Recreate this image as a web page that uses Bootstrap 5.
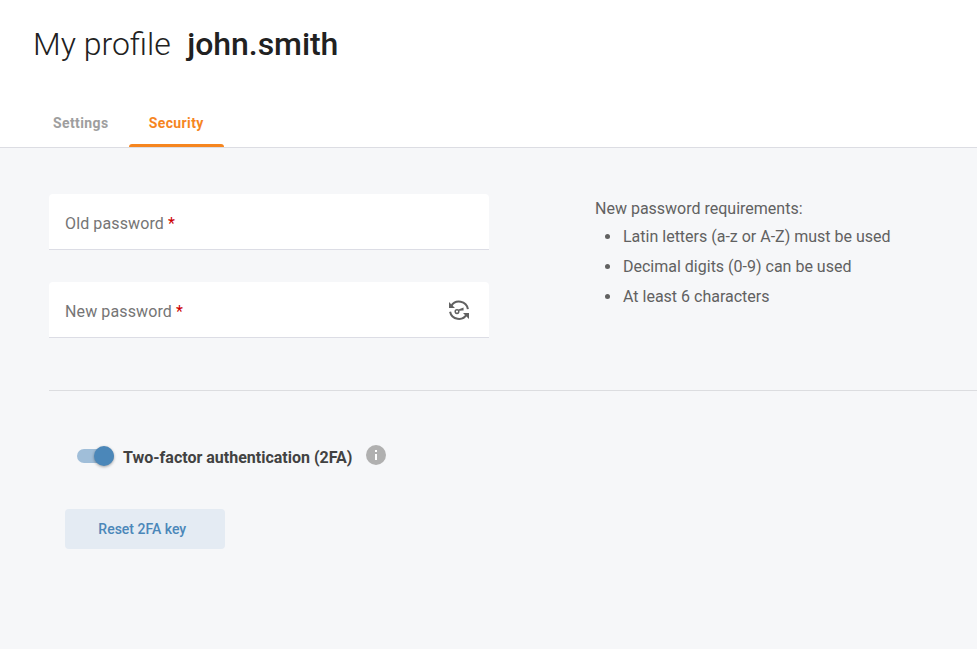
<!DOCTYPE html>
<html lang="en">
<head>
<meta charset="utf-8">
<meta name="viewport" content="width=device-width, initial-scale=1">
<title>My profile</title>
<link href="https://cdn.jsdelivr.net/npm/bootstrap@5.3.0/dist/css/bootstrap.min.css" rel="stylesheet">
<style>
body{font-family:Roboto,sans-serif;background:#f6f7f9;color:#212121;min-height:100vh;overflow:hidden}
.page-head{height:148px;border-bottom:1px solid #dcdde3}
.page-title{font-size:32px;line-height:40px;font-weight:300;padding:24px 0 0 33px;height:99px;white-space:pre}
.page-title strong{font-weight:500;margin-left:16.5px;letter-spacing:-.06px}
.profile-tabs{padding-left:33px;height:48px}
.profile-tabs .nav-link{width:95px;height:48px;padding:0 .5px 0 0;line-height:48px;font-size:14px;font-weight:700;letter-spacing:.4px;color:#9e9e9e;text-align:center;border-radius:0;position:relative}
.profile-tabs .nav-link:first-child{width:96px}
.profile-tabs .nav-link.active{color:#f6861f}
.profile-tabs .nav-link.active::after{content:"";position:absolute;left:0;right:0;bottom:0;height:3px;background:#f6861f;border-radius:3px 3px 0 0}
.page-body{padding:46px 0 0 49px}
.fields{width:440px;gap:32px}
.pw-field{height:56px;padding:4px 16px 0;background:#fff;border-bottom:1px solid #dcdde5;border-radius:4px 4px 0 0;color:#757575;letter-spacing:.12px}
.pw-field svg{margin-top:-2px}
.req-mark{color:#cc0000}
.rules{margin-left:106px;padding-top:3px;color:#616161;line-height:24px}
.rules ul{padding-left:9px;padding-top:1px}
.rules li{line-height:30px}
.rules li::before{content:"";width:5px;height:5px;border-radius:50%;background:#616161;margin:0 13.5px 2px .5px}
.divider{margin-top:52px;height:1px;background:#dcdde0}
.twofa{padding:54px 0 0 28px;height:76px}
.toggle{width:37px;height:14px;border-radius:7px;background:#a0bed9;margin-top:4px;position:relative}
.toggle span{position:absolute;right:0;top:-3px;width:20px;height:20px;border-radius:50%;background:#4b87b9;box-shadow:0 1px 3px rgba(0,0,0,.35)}
.twofa-label{margin:1px 14px 0 9px;font-weight:700;color:#424242;line-height:24px}
.btn-reset{margin:42px 0 0 16px;width:160px;height:40px;padding:0 5.5px 0 0;background:#e4ebf3;color:#4b87b9;font-size:14px;font-weight:500;border:0;border-radius:4px}
</style>
</head>
<body>
<header class="page-head bg-white">
<h1 class="page-title m-0">My profile<strong>john.smith</strong></h1>
<nav class="nav profile-tabs">
<a class="nav-link" href="#">Settings</a>
<a class="nav-link active" href="#">Security</a>
</nav>
</header>
<main class="page-body">
<section class="d-flex align-items-start">
<div class="fields d-flex flex-column">
<div class="pw-field d-flex align-items-center"><span>Old password <span class="req-mark">*</span></span></div>
<div class="pw-field d-flex align-items-center justify-content-between"><span>New password <span class="req-mark">*</span></span>
<svg width="28" height="28" viewBox="0 0 28 28" fill="none" stroke="#616161" stroke-width="2">
<path d="M6.2 9.2A9 9 0 0 1 22.9 12.2M21.8 17.3A9 9 0 0 1 5.1 14.7"/>
<path d="M4 5v6h6zM24 22v-6h-6z" fill="#616161" stroke="none"/>
<circle cx="12" cy="14.6" r="1.8" stroke-width="1.5"/><path d="M13.7 13.3l4.1-1.7v2M16 12.3v1.5" stroke-width="1.5"/>
</svg></div>
</div>
<div class="rules"><div>New password requirements:</div>
<ul class="m-0 list-unstyled"><li class="d-flex align-items-center">Latin letters (a-z or A-Z) must be used</li><li class="d-flex align-items-center">Decimal digits (0-9) can be used</li><li class="d-flex align-items-center">At least 6 characters</li></ul></div>
</section>
<div class="divider"></div>
<section class="twofa d-flex align-items-start">
<div class="toggle" role="switch" aria-checked="true" aria-label="Two-factor authentication"><span></span></div>
<div class="twofa-label">Two-factor authentication (2FA)</div>
<svg width="20" height="20" viewBox="0 0 20 20"><circle cx="10" cy="10" r="10" fill="#b0b0b0"/><path d="M9 9h2v6H9zM9 5h2v2H9z" fill="#fff"/></svg>
</section>
<button class="btn btn-reset" type="button">Reset 2FA key</button>
</main>
<script src="https://cdn.jsdelivr.net/npm/bootstrap@5.3.0/dist/js/bootstrap.bundle.min.js"></script>
</body>
</html>
